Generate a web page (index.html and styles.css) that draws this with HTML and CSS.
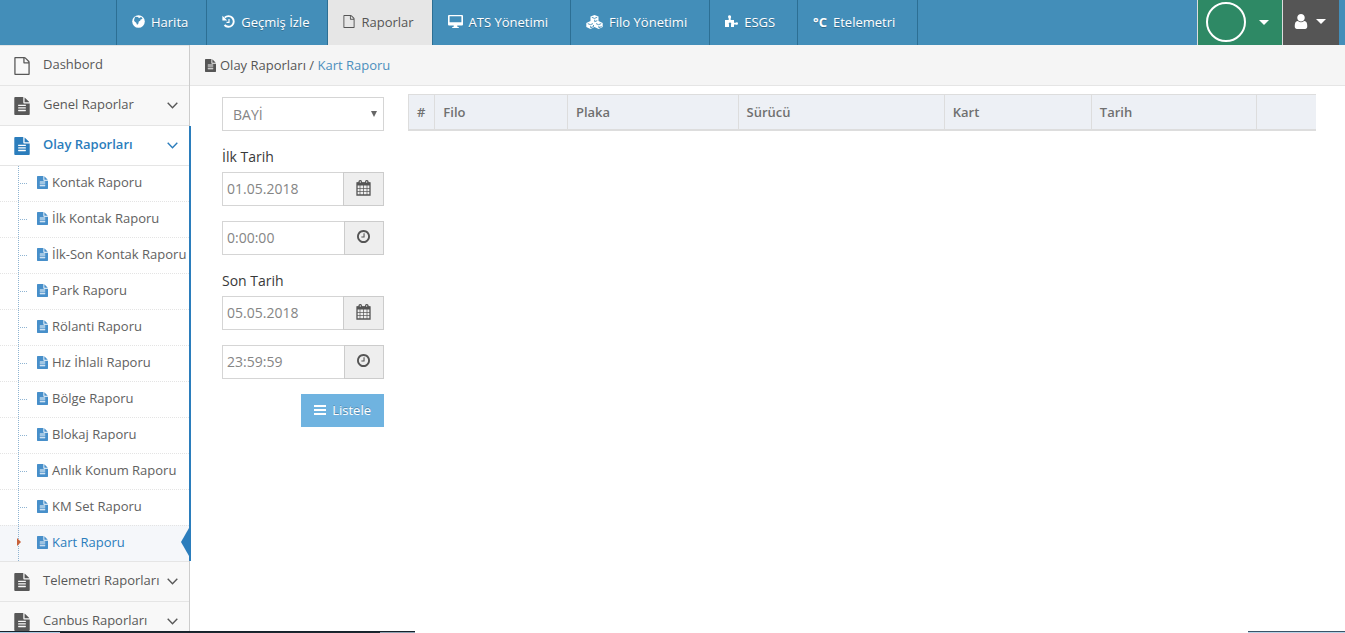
FILE: index.html
```html
<!DOCTYPE html>
<html lang="tr">
<head>
<meta charset="utf-8">
<title>Kart Raporu</title>
<link rel="stylesheet" href="styles.css">
</head>
<body>
<svg class="defs" aria-hidden="true">
  <symbol id="file-text" viewBox="128 0 1536 1792"><path d="M1596 476q14 14 28 36h-472v-472q22 14 36 28zm-476 164h544v1056q0 40-28 68t-68 28h-1344q-40 0-68-28t-28-68v-1600q0-40 28-68t68-28h800v544q0 40 28 68t68 28zm160 736v-64q0-14-9-23t-23-9h-704q-14 0-23 9t-9 23v64q0 14 9 23t23 9h704q14 0 23-9t9-23zm0-256v-64q0-14-9-23t-23-9h-704q-14 0-23 9t-9 23v64q0 14 9 23t23 9h704q14 0 23-9t9-23zm0-256v-64q0-14-9-23t-23-9h-704q-14 0-23 9t-9 23v64q0 14 9 23t23 9h704q14 0 23-9t9-23z"/></symbol>
  <symbol id="file-o" viewBox="128 0 1536 1792"><path d="M1596 380q28 28 48 76t20 88v1152q0 40-28 68t-68 28h-1344q-40 0-68-28t-28-68v-1600q0-40 28-68t68-28h896q40 0 88 20t76 48zm-444-244v376h376q-10-29-22-41l-313-313q-12-12-41-22zm384 1528v-1024h-416q-40 0-68-28t-28-68v-416h-768v1536h1280z"/></symbol>
  <symbol id="clock" viewBox="128 128 1536 1536"><path d="M1024 544v448q0 14-9 23t-23 9h-320q-14 0-23-9t-9-23v-64q0-14 9-23t23-9h224v-352q0-14 9-23t23-9h64q14 0 23 9t9 23zm416 352q0-148-73-273t-198-198-273-73-273 73-198 198-73 273 73 273 198 198 273 73 273-73 198-198 73-273zm224 0q0 209-103 385.500t-279.500 279.500-385.500 103-385.500-103-279.500-279.500-103-385.500 103-385.500 279.500-279.500 385.500-103 385.500 103 279.500 279.500 103 385.500z"/></symbol>
  <symbol id="user" viewBox="256 128 1280 1536"><path d="M1536 1399q0 109-62.500 187t-150.500 78h-854q-88 0-150.500-78t-62.500-187q0-85 8.500-160.500t31.500-152 58.500-131 94-89 134.500-34.500q131 128 313 128t313-128q76 0 134.500 34.500t94 89 58.500 131 31.500 152 8.500 160.500zm-256-887q0 159-112.500 271.500t-271.500 112.500-271.500-112.500-112.500-271.500 112.500-271.500 271.500-112.500 271.500 112.500 112.500 271.500z"/></symbol>
  <symbol id="calendar" viewBox="0 0 15 16"><path d="M1 3h13v12H1z" fill="none" stroke="currentColor" stroke-width="1.300"/><path d="M1 2.500h13v3H1z"/><path d="M4 5v10M7.500 5v10M11 5v10M1 8.500h13M1 11.500h13" fill="none" stroke="currentColor" stroke-width=".7"/><rect x="2.500" y="0" width="3.500" height="4" rx="1.500"/><rect x="9" y="0" width="3.500" height="4" rx="1.500"/><path d="M4.300 1v2M10.700 1v2" stroke="#eee" stroke-width=".7"/></symbol>
  <symbol id="globe" viewBox="0 0 13 13"><circle cx="6.500" cy="6.500" r="6.300"/><path d="M3 1.800l3 .2 1 1.300 2-1.200 1.600 1.200-1 1-1 .2-.4 1.200-1.400.8-.6 2.500-1.200.8-.8-2-1.600-1.200-.6-1.400z" fill="#438eb9"/></symbol>
  <symbol id="history" viewBox="0 0 13 13"><path d="M2.700 2.700A5.300 5.300 0 1 1 2.500 10" fill="none" stroke="currentColor" stroke-width="1.900"/><path d="M.4.700v4.700h4.800z"/><path d="M7 4v3.400H4.500" fill="none" stroke="currentColor" stroke-width="1.200"/></symbol>
  <symbol id="desktop" viewBox="0 0 15 13"><path fill-rule="evenodd" d="M1 0h13q1 0 1 1v8.500q0 1-1 1H9.200l.3 1.500h1.300v1H4.200v-1h1.300l.3-1.500H1q-1 0-1-1V1q0-1 1-1zm.6 1.300v5.900h11.800V1.300z"/></symbol>
  <symbol id="cubes" viewBox="0 0 17 14"><path d="M8.500 0l4 1.600v4.500l4.200 1.800v4.200L12.600 14 8.500 12.100 4.400 14 .3 12.100V7.900l4.200-1.800V1.600z"/><path d="M5.800 2.300l2.700 1.100 2.700-1.100M8.700 4.700v2l2.600-1.100M1.800 8.600l2.600 1.100L7 8.600M4.700 11v1.800L7.500 11.500V10M10 8.600l2.600 1.100 2.600-1.100M12.900 11v1.800l2.700-1.300" fill="none" stroke="#438eb9" stroke-width=".9"/></symbol>
  <symbol id="puzzle" viewBox="0 0 13 13"><path d="M0 5h3.700V3.500C2.500 1.800 3 .3 4.500.3S6.600 1.800 5.700 3.500V5H9v2.800h1.500c1-1 2.500-.6 2.500.8s-1.500 1.600-2.500.8H9V12H6V9.600c.6-1.200 0-2-1-2s-1.600.8-1 2V12H0z"/></symbol>
  <symbol id="chevron" viewBox="0 0 11 7"><path d="M.7.800l4.800 4.900L10.300.800" fill="none" stroke="currentColor" stroke-width="1.400"/></symbol>
  <symbol id="bars" viewBox="0 0 12 10"><path d="M0 0h12v2H0zM0 4h12v2H0zM0 8h12v2H0z"/></symbol>
</svg>

<header class="navbar">
  <nav class="nav" aria-label="Ana menü">
    <a class="nav-link" href="#"><svg class="nav-icon"><use href="#globe"/></svg>Harita</a>
    <a class="nav-link" href="#"><svg class="nav-icon"><use href="#history"/></svg>Geçmiş İzle</a>
    <a class="nav-link active" href="#"><svg class="nav-icon narrow"><use href="#file-o"/></svg>Raporlar</a>
    <a class="nav-link roomy" href="#"><svg class="nav-icon wide"><use href="#desktop"/></svg>ATS Yönetimi</a>
    <a class="nav-link roomy" href="#"><svg class="nav-icon wider"><use href="#cubes"/></svg>Filo Yönetimi</a>
    <a class="nav-link roomy" href="#"><svg class="nav-icon"><use href="#puzzle"/></svg>ESGS</a>
    <a class="nav-link roomy" href="#"><span class="celsius">°C</span>Etelemetri</a>
  </nav>
  <div class="account">
    <button class="account-button company" type="button" aria-label="Firma"><span class="avatar"></span><span class="caret"></span></button>
    <button class="account-button profile" type="button" aria-label="Kullanıcı"><svg class="user-icon"><use href="#user"/></svg><span class="caret"></span></button>
  </div>
</header>

<div class="container">
  <aside class="sidebar">
    <ul class="menu">
      <li class="menu-item"><a class="menu-link" href="#"><svg class="menu-icon"><use href="#file-o"/></svg><span class="menu-text">Dashbord</span></a></li>
      <li class="menu-item"><a class="menu-link" href="#"><svg class="menu-icon"><use href="#file-text"/></svg><span class="menu-text">Genel Raporlar</span><svg class="chevron"><use href="#chevron"/></svg></a></li>
      <li class="menu-item open"><a class="menu-link" href="#"><svg class="menu-icon"><use href="#file-text"/></svg><span class="menu-text">Olay Raporları</span><svg class="chevron"><use href="#chevron"/></svg></a>
        <ul class="submenu">
          <li class="sub-item"><a class="sub-link" href="#"><svg class="sub-icon"><use href="#file-text"/></svg>Kontak Raporu</a></li>
          <li class="sub-item"><a class="sub-link" href="#"><svg class="sub-icon"><use href="#file-text"/></svg>İlk Kontak Raporu</a></li>
          <li class="sub-item"><a class="sub-link" href="#"><svg class="sub-icon"><use href="#file-text"/></svg>İlk-Son Kontak Raporu</a></li>
          <li class="sub-item"><a class="sub-link" href="#"><svg class="sub-icon"><use href="#file-text"/></svg>Park Raporu</a></li>
          <li class="sub-item"><a class="sub-link" href="#"><svg class="sub-icon"><use href="#file-text"/></svg>Rölanti Raporu</a></li>
          <li class="sub-item"><a class="sub-link" href="#"><svg class="sub-icon"><use href="#file-text"/></svg>Hız İhlali Raporu</a></li>
          <li class="sub-item"><a class="sub-link" href="#"><svg class="sub-icon"><use href="#file-text"/></svg>Bölge Raporu</a></li>
          <li class="sub-item"><a class="sub-link" href="#"><svg class="sub-icon"><use href="#file-text"/></svg>Blokaj Raporu</a></li>
          <li class="sub-item"><a class="sub-link" href="#"><svg class="sub-icon"><use href="#file-text"/></svg>Anlık Konum Raporu</a></li>
          <li class="sub-item"><a class="sub-link" href="#"><svg class="sub-icon"><use href="#file-text"/></svg>KM Set Raporu</a></li>
          <li class="sub-item current"><a class="sub-link" href="#"><svg class="sub-icon"><use href="#file-text"/></svg>Kart Raporu</a></li>
        </ul>
      </li>
      <li class="menu-item"><a class="menu-link" href="#"><svg class="menu-icon"><use href="#file-text"/></svg><span class="menu-text">Telemetri Raporları</span><svg class="chevron"><use href="#chevron"/></svg></a></li>
      <li class="menu-item"><a class="menu-link" href="#"><svg class="menu-icon"><use href="#file-text"/></svg><span class="menu-text">Canbus Raporları</span><svg class="chevron"><use href="#chevron"/></svg></a></li>
    </ul>
  </aside>

  <main class="main">
    <div class="breadcrumb"><svg class="crumb-icon"><use href="#file-text"/></svg><span>Olay Raporları / <a class="crumb-link" href="#">Kart Raporu</a></span></div>
    <div class="content">
      <form class="filters">
        <select class="select" aria-label="Bayi"><option>BAYİ</option></select>
        <label class="label" for="start-date">İlk Tarih</label>
        <div class="field"><input class="input" id="start-date" type="text" value="01.05.2018"><button class="addon" type="button" aria-label="Takvim"><svg class="calendar-icon"><use href="#calendar"/></svg></button></div>
        <div class="field"><input class="input" type="text" value="0:00:00" aria-label="İlk saat"><button class="addon time" type="button" aria-label="Saat"><svg class="clock-icon"><use href="#clock"/></svg></button></div>
        <label class="label" for="end-date">Son Tarih</label>
        <div class="field"><input class="input" id="end-date" type="text" value="05.05.2018"><button class="addon" type="button" aria-label="Takvim"><svg class="calendar-icon"><use href="#calendar"/></svg></button></div>
        <div class="field"><input class="input" type="text" value="23:59:59" aria-label="Son saat"><button class="addon time" type="button" aria-label="Saat"><svg class="clock-icon"><use href="#clock"/></svg></button></div>
        <button class="submit" type="button"><svg class="bars-icon"><use href="#bars"/></svg>Listele</button>
      </form>
      <div class="results">
        <table class="table">
          <colgroup><col class="col-no"><col class="col-fleet"><col class="col-plate"><col class="col-driver"><col class="col-card"><col class="col-date"><col></colgroup>
          <thead><tr><th>#</th><th>Filo</th><th>Plaka</th><th>Sürücü</th><th>Kart</th><th>Tarih</th><th></th></tr></thead>
        </table>
      </div>
    </div>
  </main>
</div>
<div class="bottom-edge"><span class="edge-left"></span><span class="edge-right"></span></div>
</body>
</html>
```
FILE: styles.css
```css
* { box-sizing: border-box; }
html, body { height: 100%; }
body {
  margin: 0;
  display: flex;
  flex-direction: column;
  overflow: hidden;
  background: #fff;
  color: #393939;
  font: 13px/20px "Open Sans", sans-serif;
}
a { color: inherit; text-decoration: none; }
ul { margin: 0; padding: 0; list-style: none; }
svg { flex: none; fill: currentColor; }
button, input, select { font-family: inherit; border-radius: 0; }
.defs { display: none; }

.navbar {
  flex: none;
  display: flex;
  justify-content: space-between;
  height: 45px;
  padding: 0 6px 0 116px;
  background: #438eb9;
  color: #fff;
}
.nav { display: flex; border-right: 1px solid #2c6f94; }
.nav-link {
  display: flex;
  align-items: center;
  gap: 6px;
  padding: 0 18px 2px 15px;
  border-left: 1px solid #2c6f94;
  text-shadow: 0 1px 0 rgba(0, 0, 0, .25);
  white-space: nowrap;
}
.nav-link.roomy { padding-right: 22px; }
.nav-link.active { background: #e6e6e6; color: #555; text-shadow: none; }
.nav-icon { width: 13px; height: 13px; }
.nav-icon.narrow { width: 12px; }
.nav-icon.wide { width: 15px; }
.nav-icon.wider { width: 17px; height: 14px; }
.celsius { font-weight: 700; }
.account { display: flex; }
.account-button {
  display: flex;
  align-items: center;
  border: 0;
  border-left: 1px solid #ddd;
  color: #fff;
}
.company { gap: 13px; padding: 0 13px 1px 8px; background: #2e8965; }
.profile { gap: 8px; padding: 0 13px 2px 11px; background: #555; }
.avatar { width: 40px; height: 40px; border: 2px solid #fff; border-radius: 50%; }
.user-icon { width: 14px; height: 15px; }
.caret { border: 5px solid transparent; border-top-color: #fff; border-bottom: 0; }

.container { flex: 1; min-height: 0; display: flex; }
.sidebar {
  flex: none;
  width: 190px;
  border-right: 1px solid #ccc;
  background: #f2f2f2;
}
.menu-item { border-top: 1px solid #e5e5e5; background: #f8f8f8; color: #585858; }
.menu-link { display: flex; align-items: center; height: 39px; padding: 0 11px 0 14px; }
.menu-icon { width: 16px; height: 18px; margin-right: 13px; }
.menu-text { flex: 1; min-width: 0; white-space: nowrap; padding-bottom: 4px; }
.chevron { width: 11px; height: 7px; }
.menu-item.open { position: relative; background: #fff; }
.menu-item.open > .menu-link { color: #2b7dbc; font-weight: 600; }
.menu-item.open::after {
  content: "";
  position: absolute;
  top: 0;
  bottom: 0;
  right: -2px;
  width: 2px;
  background: #2b7dbc;
}
.submenu { position: relative; border-top: 1px solid #e5e5e5; color: #616161; }
.submenu::before {
  content: "";
  position: absolute;
  z-index: 1;
  top: 0;
  bottom: 0;
  left: 18px;
  border-left: 1px dotted #8fb4d2;
}
.sub-item { position: relative; border-top: 1px dotted #e4e4e4; }
.sub-item:first-child { border-top: 0; }
.sub-item::before {
  content: "";
  position: absolute;
  top: 17px;
  left: 20px;
  width: 7px;
  border-top: 1px dotted #8fb4d2;
}
.sub-link { display: flex; align-items: center; gap: 4px; height: 35px; padding: 0 0 3px 37px; white-space: nowrap; }
.sub-icon { width: 11px; height: 13px; color: #478fca; }
.sub-item.current { background: #f5f7fa; color: #2b7dbc; }
.sub-item.current::before {
  z-index: 2;
  top: 12px;
  left: 17px;
  width: 0;
  border: 4px solid transparent;
  border-left-color: #c86139;
  border-right: 0;
}
.sub-item.current::after {
  content: "";
  position: absolute;
  top: 2px;
  right: 0;
  border: 14px solid transparent;
  border-right: 8px solid #2b7dbc;
  border-left: 0;
}

.main { flex: 1; min-width: 0; }
.breadcrumb {
  display: flex;
  align-items: center;
  gap: 4px;
  height: 41px;
  padding: 0 15px;
  border-bottom: 1px solid #e5e5e5;
  background: #f5f5f5;
  color: #555;
}
.crumb-icon { width: 11px; height: 13px; }
.crumb-link { color: #4c8fbd; }
.content { display: flex; align-items: flex-start; gap: 24px; padding: 8px 29px 8px 32px; }
.filters { flex: none; display: flex; flex-direction: column; width: 162px; padding-top: 3px; }
.select {
  height: 34px;
  padding: 0 10px;
  border: 1px solid #d5d5d5;
  appearance: none;
  background: #fff url("data:image/svg+xml,%3Csvg xmlns='http://www.w3.org/2000/svg' viewBox='0 0 6 6'%3E%3Cpath d='M0 0h6L3 6z' fill='%23666'/%3E%3C/svg%3E") no-repeat right 6px center / 6px 6px;
  color: #858585;
  font-size: 14px;
}
.label { margin: 16px 0 5px; font-size: 14px; }
.field { display: flex; height: 34px; margin-bottom: 15px; }
.field + .label { margin-top: 1px; }
.input {
  flex: 1;
  min-width: 0;
  padding: 0 4px 2px;
  border: 1px solid #d5d5d5;
  border-right: 0;
  color: #858585;
  font-size: 14px;
}
.addon {
  display: flex;
  align-items: center;
  justify-content: center;
  width: 41px;
  padding: 0 0 2px;
  border: 1px solid #ccc;
  background: #eee;
  color: #555;
}
.addon.time { width: 40px; padding: 0 1px 3px 0; }
.calendar-icon { width: 15px; height: 16px; }
.clock-icon { width: 13px; height: 13px; }
.submit {
  display: flex;
  align-items: center;
  justify-content: center;
  align-self: flex-end;
  gap: 6px;
  height: 33px;
  padding: 0 13px 1px;
  border: 0;
  background: #6fb3e0;
  color: #fff;
  font-size: 13px;
  text-shadow: 0 -1px 0 rgba(0, 0, 0, .25);
}
.bars-icon { width: 12px; height: 10px; }

.results { flex: 1; min-width: 0; }
.table { width: 100%; table-layout: fixed; border-collapse: separate; border-spacing: 0; }
.table th {
  height: 37px;
  padding: 0 8px;
  border: 1px solid #ddd;
  border-width: 1px 0 2px 1px;
  background: #edf0f5;
  color: #707070;
  font-weight: 600;
  text-align: left;
}
.col-no { width: 2.9%; }
.col-fleet { width: 14.6%; }
.col-plate { width: 18.8%; }
.col-driver { width: 22.7%; }
.col-card { width: 16.2%; }
.col-date { width: 18.2%; }

.bottom-edge {
  position: fixed;
  left: 0;
  right: 0;
  bottom: 0;
  display: flex;
  justify-content: space-between;
}
.edge-left, .edge-right { height: 2px; border-top: 1px solid #17222c; background: #8ea2b1; }
.edge-left { width: 415px; background: linear-gradient(90deg, #a9cbe2 60px, #1c2830 60px, #1c2830 380px, #8ea2b1 380px); }
.edge-right { width: 97px; border-color: #3a5468; background: #b9d3e6; }
```
